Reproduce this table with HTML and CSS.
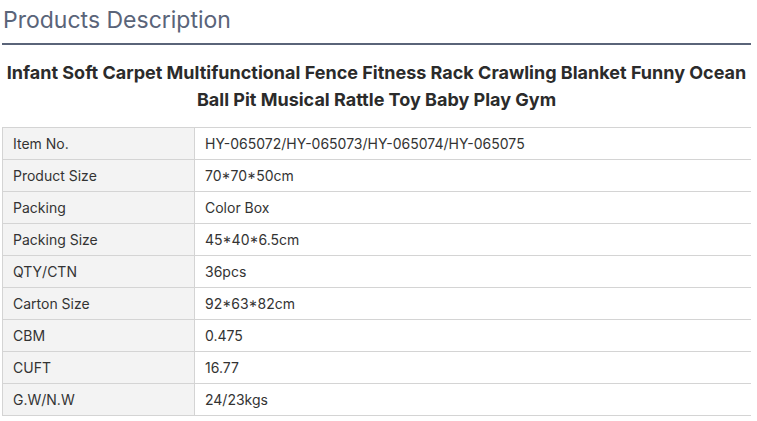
FILE: index.html
```html
<!DOCTYPE html>
<html>
<head>
<meta charset="utf-8">
<link rel="stylesheet" href="styles.css">
</head>
<body>
<div class="wrap">
  <h2 class="heading">Products Description</h2>
  <h1 class="title">Infant Soft Carpet Multifunctional Fence Fitness Rack Crawling Blanket Funny Ocean Ball Pit Musical Rattle Toy Baby Play Gym</h1>
  <table class="specs">
    <tr><td class="k">Item No.</td><td class="v">HY-065072/HY-065073/HY-065074/HY-065075</td></tr>
    <tr><td class="k">Product Size</td><td class="v">70*70*50cm</td></tr>
    <tr><td class="k">Packing</td><td class="v">Color Box</td></tr>
    <tr><td class="k">Packing Size</td><td class="v">45*40*6.5cm</td></tr>
    <tr><td class="k">QTY/CTN</td><td class="v">36pcs</td></tr>
    <tr><td class="k">Carton Size</td><td class="v">92*63*82cm</td></tr>
    <tr><td class="k">CBM</td><td class="v">0.475</td></tr>
    <tr><td class="k">CUFT</td><td class="v">16.77</td></tr>
    <tr><td class="k">G.W/N.W</td><td class="v">24/23kgs</td></tr>
  </table>
</div>
</body>
</html>
```
FILE: styles.css
```css
html, body { margin: 0; padding: 0; background: #fff; }
body { font-family: Inter, "Noto Sans", sans-serif; color: #333; }
.wrap { width: 749px; margin-left: 2px; }
.heading {
  margin: 0;
  padding: 4px 0 0 1px;
  height: 39px;
  font-size: 23px;
  font-weight: 400;
  line-height: 32px;
  color: #5a6479;
  border-bottom: 2px solid #5a6479;
  box-sizing: content-box;
}
.title {
  margin: 14px 0 0;
  font-size: 18px;
  font-weight: 700;
  line-height: 27px;
  text-align: center;
  color: #2b2b2b;
}
.specs {
  margin-top: 14px;
  width: 100%;
  border-collapse: collapse;
  font-size: 14px;
  color: #333;
}
.specs td {
  height: 32px;
  padding: 0 10px;
  border: 1px solid #d4d4d4;
  box-sizing: border-box;
}
.specs tr > td:last-child { border-right: none; }
.specs .k { width: 192px; background: #f3f3f3; }
```
